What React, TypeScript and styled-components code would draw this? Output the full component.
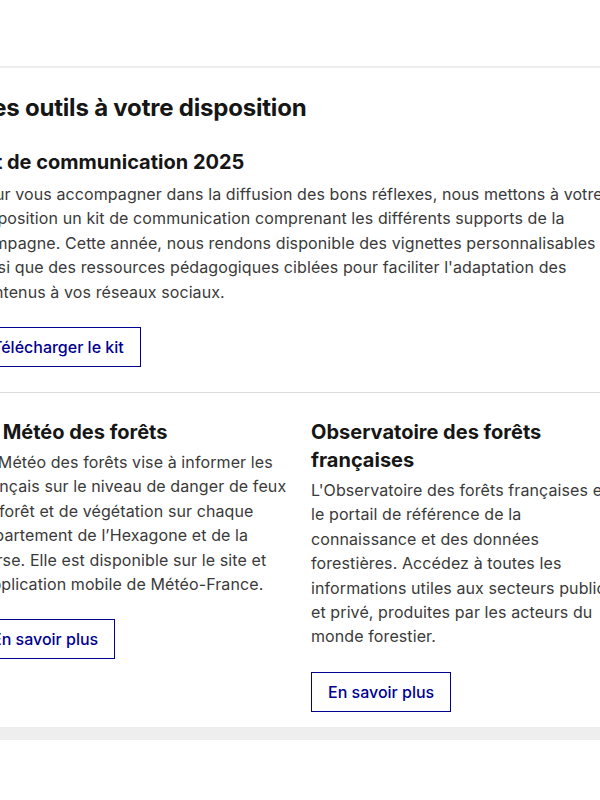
import React from "react";
import styled, { createGlobalStyle } from "styled-components";

const GlobalStyle = createGlobalStyle`
  html, body {
    margin: 0;
    padding: 0;
    background: #fff;
    overflow: hidden;
  }
  body {
    font-family: Inter, "Noto Sans", sans-serif;
    color: #3a3a3a;
  }
`;

interface ITool {
  title: string;
  text: string;
  cta: string;
}

const tools: ITool[] = [
  {
    title: "La Météo des forêts",
    text:
      "La Météo des forêts vise à informer les Français sur le niveau de danger de feux de forêt et de végétation sur chaque département de l’Hexagone et de la Corse. Elle est disponible sur le site et l’application mobile de Météo-France.",
    cta: "En savoir plus"
  },
  {
    title: "Observatoire des forêts françaises",
    text:
      "L'Observatoire des forêts françaises est le portail de référence de la connaissance et des données forestières. Accédez à toutes les informations utiles aux secteurs publics et privé, produites par les acteurs du monde forestier.",
    cta: "En savoir plus"
  }
];

const Page = styled.div`
  padding-top: 66px;
`;

const Section = styled.section`
  border-top: 2px solid #ececec;
`;

// the section is wider than the window, it starts a bit off the left edge
const Container = styled.div`
  width: 648px;
  margin-left: -25px;
  padding-top: 24px;
`;

const SectionTitle = styled.h2`
  margin: 0 0 24px;
  font-size: 24px;
  line-height: 32px;
  font-weight: 700;
  letter-spacing: -0.2px;
  color: #161616;
`;

const Title = styled.h3`
  margin: 0 0 ${(p: { $gap?: number }) => p.$gap ?? 4}px;
  font-size: 20px;
  line-height: 28px;
  font-weight: 700;
  color: #161616;
`;

const Text = styled.p`
  margin: 0;
  font-size: 16px;
  line-height: 24.4px;
  letter-spacing: 0.1px;
  color: #3a3a3a;
`;

const Button = styled.a`
  display: inline-block;
  margin-top: 23px;
  padding: 7px 16px;
  font-size: 16px;
  line-height: 24px;
  font-weight: 500;
  color: #000091;
  border: 1px solid #000091;
  text-decoration: none;
  cursor: pointer;
`;

const Kit = styled.div`
  padding-bottom: 25px;
  border-bottom: 1px solid #dddddd;
`;

const Grid = styled.div`
  display: grid;
  grid-template-columns: 312px 312px;
  column-gap: 24px;
  align-items: start;
  padding: 25px 0 15px;
`;

const Card = styled.div`
  display: flex;
  flex-direction: column;
  align-items: flex-start;
`;

const Band = styled.div`
  height: 13px;
  background: #eeeeee;
`;

export default function App() {
  return (
    <>
      <GlobalStyle />
      <Page>
        <Section>
          <Container>
            <SectionTitle>Des outils à votre disposition</SectionTitle>
            <Kit>
              <Title $gap={6}>Kit de communication 2025</Title>
              <Text>
                Pour vous accompagner dans la diffusion des bons réflexes, nous mettons à votre
                disposition un kit de communication comprenant les différents supports de la
                campagne. Cette année, nous rendons disponible des vignettes personnalisables
                ainsi que des ressources pédagogiques ciblées pour faciliter l'adaptation des
                contenus à vos réseaux sociaux.
              </Text>
              <Button>Télécharger le kit</Button>
            </Kit>
            <Grid>
              {tools.map((tool) => (
                <Card key={tool.title}>
                  <Title>{tool.title}</Title>
                  <Text>{tool.text}</Text>
                  <Button>{tool.cta}</Button>
                </Card>
              ))}
            </Grid>
          </Container>
        </Section>
        <Band />
      </Page>
    </>
  );
}
